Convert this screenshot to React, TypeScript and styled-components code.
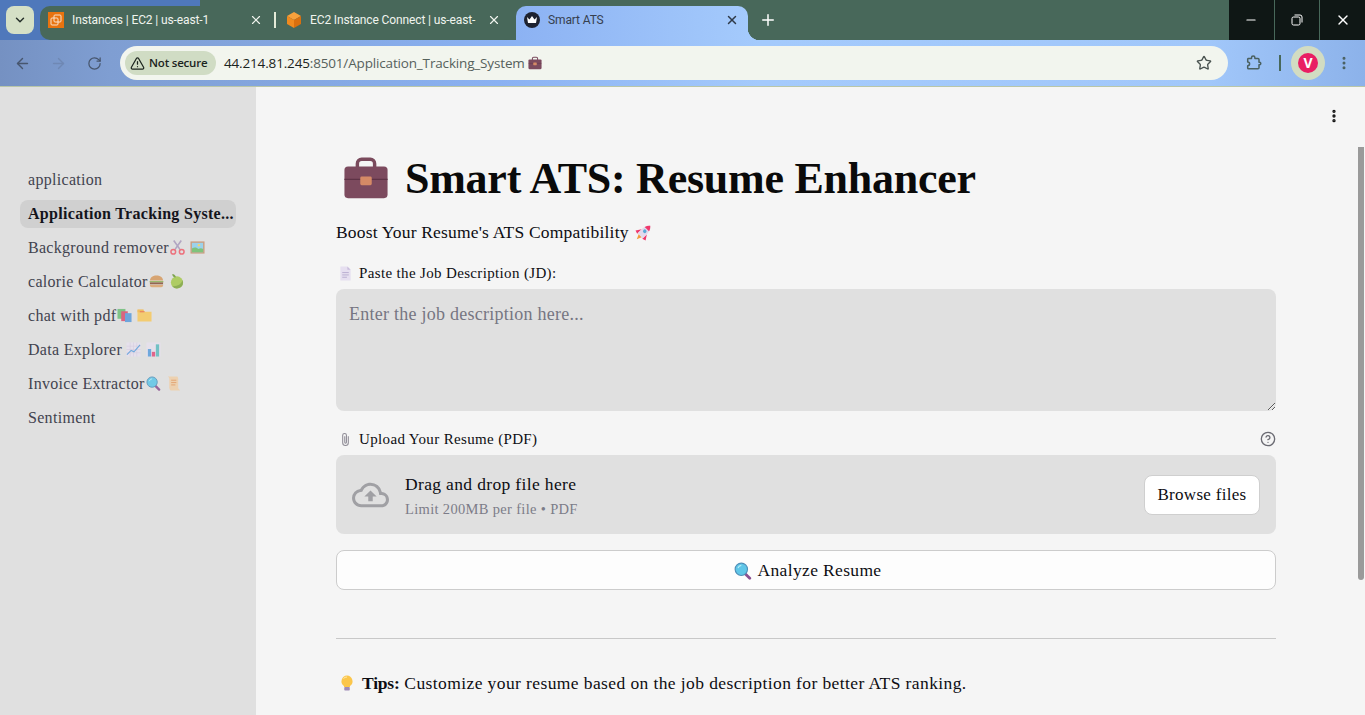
import { FC, ReactNode } from 'react';
import styled, { createGlobalStyle } from 'styled-components';
import {
  ArrowLeft,
  ArrowRight,
  ChevronDown,
  CircleHelp,
  EllipsisVertical,
  Minus,
  Plus,
  RotateCw,
  Star,
  TriangleAlert,
  X,
} from 'lucide-react';
import { MdOutlineCloudUpload } from 'react-icons/md';

const SERIF = '"Liberation Serif", "Times New Roman", serif';
const UI = '"Open Sans", "Noto Sans", sans-serif';
const TAB_FONT = 'Roboto, "Noto Sans", sans-serif';

const GlobalStyle = createGlobalStyle`
  html, body {
    margin: 0;
    padding: 0;
    overflow: hidden;
    background: #f5f5f5;
  }
  * {
    box-sizing: border-box;
  }
`;

type EmojiName =
  | 'briefcase' | 'rocket' | 'page' | 'clip' | 'scissors' | 'picture' | 'burger' | 'apple'
  | 'books' | 'folder' | 'trend' | 'bars' | 'magnifier' | 'scroll' | 'bulb';

const EMOJI: Record<EmojiName, ReactNode> = {
  briefcase: (
    <>
      <path d="M10 9V6a3 3 0 0 1 3-3h6a3 3 0 0 1 3 3v3" fill="none" stroke="#7a4a5c" strokeWidth="2.4" />
      <rect x="1" y="8" width="30" height="22" rx="2.5" fill="#7c4a5e" />
      <path d="M1 17h30" stroke="#5e3346" strokeWidth="0.8" />
      <rect x="12" y="15" width="8" height="6" rx="1" fill="#d58a66" />
    </>
  ),
  rocket: (
    <g transform="rotate(45 16 16)">
      <path d="M12 23h8l-4 9z" fill="#f59c3c" />
      <path d="M10 14l-6 9 6 2zM22 14l6 9-6 2z" fill="#f0386b" />
      <path d="M16 0c5 4 7 11 6 24H10C9 11 11 4 16 0z" fill="#e3d9ec" />
      <path d="M16 0c2.500 2 4.200 4.500 5.200 8H10.800C11.800 4.500 13.500 2 16 0z" fill="#f0386b" />
      <circle cx="16" cy="13" r="3" fill="#5aa9d6" />
    </g>
  ),
  page: (
    <>
      <path d="M5 1h15l7 7v23H5z" fill="#e6dff0" />
      <path d="M20 1l7 7h-7z" fill="#c9bddb" />
      <path d="M9 14h14M9 19h14M9 24h10" stroke="#b9add0" strokeWidth="2" />
    </>
  ),
  clip: (
    <path
      d="M22 9v14a6 6 0 0 1-12 0V7a4 4 0 0 1 8 0v15a1.800 1.800 0 0 1-3.600 0V9"
      fill="none"
      stroke="#8d8a94"
      strokeWidth="2.200"
    />
  ),
  scissors: (
    <>
      <path d="M8 1l14 20M24 1L10 21" stroke="#a99bbd" strokeWidth="3.400" />
      <circle cx="7" cy="25" r="5" fill="none" stroke="#ef5f6c" strokeWidth="3.200" />
      <circle cx="25" cy="25" r="5" fill="none" stroke="#ef5f6c" strokeWidth="3.200" />
    </>
  ),
  picture: (
    <>
      <rect x="1" y="3" width="30" height="26" fill="#c99470" />
      <rect x="4" y="6" width="24" height="20" fill="#8fd0ee" />
      <path d="M4 26v-8c6-4 11-2 14 1 3-2 7-2 10 0v7z" fill="#6fbe6a" />
      <circle cx="19" cy="11" r="2.500" fill="#f7d25c" />
    </>
  ),
  burger: (
    <>
      <path d="M2 14C2 7 9 3 16 3s14 4 14 11z" fill="#d69a5f" />
      <rect x="1" y="15" width="30" height="3" rx="1.500" fill="#8fb35a" />
      <rect x="2" y="18" width="28" height="4" fill="#86503c" />
      <path d="M2 23h28v1a4 4 0 0 1-4 4H6a4 4 0 0 1-4-4z" fill="#dba56c" />
    </>
  ),
  apple: (
    <>
      <circle cx="17" cy="18" r="13" fill="#a6c94f" />
      <path d="M30 18a13 13 0 0 1-23 8c10 1 19-3 22-13z" fill="#7fa63d" />
      <path d="M7 0c4 0 7 3 8 7-4 1-8-2-8-7z" fill="#6d9a38" />
    </>
  ),
  books: (
    <>
      <rect x="1" y="2" width="17" height="21" fill="#6fbf78" />
      <rect x="9" y="7" width="14" height="21" fill="#d94f70" />
      <rect x="17" y="11" width="14" height="19" fill="#5a9bdc" />
    </>
  ),
  folder: (
    <>
      <path d="M1 5h13l3 3h14v21H1z" fill="#f7c95e" />
      <path d="M1 3h13v6H1z" fill="#f3b84a" />
      <path d="M6 8h10" stroke="#e8604c" strokeWidth="2" />
    </>
  ),
  trend: (
    <>
      <rect x="1" y="1" width="30" height="30" fill="#e6e0ee" />
      <path d="M1 9h30M1 16h30M1 23h30M9 1v30M16 1v30M23 1v30" stroke="#cfc6dc" />
      <path d="M2 27l9-9 6 3L30 6" fill="none" stroke="#5b9fdc" strokeWidth="2.400" />
    </>
  ),
  bars: (
    <>
      <rect x="1" y="1" width="30" height="30" fill="#e6e0ee" />
      <rect x="4" y="15" width="7" height="16" fill="#5b9fdc" />
      <rect x="12.500" y="21" width="7" height="10" fill="#e0507c" />
      <rect x="21" y="5" width="7" height="26" fill="#5fbcc0" />
    </>
  ),
  magnifier: (
    <>
      <path d="M19 20l9 9" stroke="#8a4f90" strokeWidth="5" strokeLinecap="round" />
      <circle cx="13" cy="13" r="11" fill="#5fc6e8" stroke="#4f8fb8" strokeWidth="2" />
      <path d="M7 11a7 7 0 0 1 6-5" fill="none" stroke="#b8ecf8" strokeWidth="2" />
    </>
  ),
  scroll: (
    <>
      <path d="M4 1h20c2 2 2 4 2 6v19l4 5H10c-2-2-3-4-3-6V7C7 5 7 3 4 1z" fill="#f0cfa8" />
      <path d="M11 9h11M11 14h11M11 19h9" stroke="#e39a5f" strokeWidth="2" />
    </>
  ),
  bulb: (
    <>
      <path d="M16 1a11.500 11.500 0 0 0-6 21v2h12v-2a11.500 11.500 0 0 0-6-21z" fill="#fbc64b" />
      <path d="M9 7a9 9 0 0 1 7-3" fill="none" stroke="#ffe9a8" strokeWidth="2" />
      <rect x="10.500" y="24" width="11" height="7" rx="1.500" fill="#a08cb8" />
    </>
  ),
};

const EmojiSvg = styled.svg<{ $size: number; $gap?: number }>`
  width: ${({ $size }) => $size}px;
  height: ${({ $size }) => $size}px;
  margin-left: ${({ $gap }) => $gap ?? 0}px;
  flex-shrink: 0;
  display: inline-block;
`;

const Emoji: FC<{ name: EmojiName; size: number; gap?: number }> = ({ name, size, gap }) => (
  <EmojiSvg viewBox="0 0 32 32" $size={size} $gap={gap}>
    {EMOJI[name]}
  </EmojiSvg>
);

const Shell = styled.div`
  width: 1365px;
  height: 715px;
  display: flex;
  flex-direction: column;
  overflow: hidden;
  position: relative;
`;

/* browser chrome */
const TabStrip = styled.div`
  height: 40px;
  display: flex;
  align-items: flex-start;
  background: linear-gradient(90deg, #4f78bb 0 200px, #48685a 200px);
  flex-shrink: 0;
`;

const TabSearch = styled.div`
  width: 28px;
  height: 28px;
  margin: 6px 6px 0 6px;
  border-radius: 8px;
  background: #d5e0c6;
  color: #26302a;
  display: flex;
  align-items: center;
  justify-content: center;
`;

const TabGroup = styled.div`
  width: 476px;
  height: 34px;
  margin-top: 6px;
  padding-bottom: 6px;
  background: #48685a;
  border-radius: 10px 0 12px 10px;
  display: flex;
  align-items: center;
`;

const Tab = styled.div<{ $width: number; $left: number; $right: number }>`
  width: ${({ $width }) => $width}px;
  height: 100%;
  display: flex;
  align-items: center;
  padding: 0 ${({ $right }) => $right}px 0 ${({ $left }) => $left}px;
  color: #f0f4ee;
  font: 12px/16px ${TAB_FONT};
  white-space: nowrap;
  overflow: hidden;
  flex-shrink: 0;
`;

const TabTitle = styled.span`
  flex: 1;
  margin-left: 8px;
  letter-spacing: -0.12px;
`;

const TabClose = styled.span<{ $dark?: boolean }>`
  width: 28px;
  display: flex;
  justify-content: center;
  color: ${({ $dark }) => ($dark ? '#2f3a48' : '#f0f4ee')};
  flex-shrink: 0;
`;

const TabDivider = styled.span`
  width: 2px;
  height: 16px;
  background: #e4ead8;
  flex-shrink: 0;
`;

const ActiveTab = styled.div`
  position: relative;
  width: 232px;
  height: 34px;
  margin-top: 6px;
  padding: 0 2px 6px 8px;
  display: flex;
  align-items: center;
  border-radius: 10px 10px 0 0;
  background: linear-gradient(90deg, #8cb2f3, #a4cafc);
  color: #36404e;
  font: 12px/16px ${TAB_FONT};

  &::after {
    content: '';
    position: absolute;
    right: -12px;
    bottom: 0;
    width: 12px;
    height: 12px;
    background: radial-gradient(circle at 100% 0, transparent 12px, #a4cafc 12.500px);
  }
`;

const NewTab = styled.div`
  width: 40px;
  height: 40px;
  display: flex;
  align-items: center;
  justify-content: center;
  color: #fff;
`;

const StripSpacer = styled.div`
  flex: 1;
`;

const WindowControls = styled.div`
  width: 136px;
  height: 40px;
  display: flex;
  background: #0f1715;
`;

const WindowButton = styled.div`
  flex: 1;
  display: flex;
  align-items: center;
  justify-content: center;
  color: #fff;

  & + & {
    border-left: 1px solid #48685a;
  }
`;

const RestoreIcon = () => (
  <svg width="12" height="12" viewBox="0 0 12 12" fill="none" stroke="#fff" strokeWidth="1">
    <rect x="1" y="3" width="8" height="8" rx="1.500" />
    <path d="M3.500 1h5.500a2 2 0 0 1 2 2v5.500" />
  </svg>
);

const ExtensionIcon = () => (
  <svg width="18" height="18" viewBox="0 0 18 18" fill="none" stroke="currentColor" strokeWidth="1.500" strokeLinejoin="round">
    <path d="M3 4.500h3.500V3.800a1.700 1.700 0 0 1 3.400 0v.7h3.100a1 1 0 0 1 1 1v2.700h.5a1.300 1.300 0 0 1 0 2.600H14v2.900a1 1 0 0 1-1 1H3.500a.8.800 0 0 1-.8-.8v-2.200a1.800 1.800 0 0 0 0-3.800V5.300a.8.800 0 0 1 .3-.8z" />
  </svg>
);

const Toolbar = styled.div`
  height: 47px;
  flex-shrink: 0;
  display: flex;
  align-items: flex-start;
  padding: 6px 0 0 4px;
  background: linear-gradient(90deg, #7591c2 0, #7f9ed2 110px, #8ab1f2 500px, #a4cafc 760px, #a1c7fa 1210px, #8cb2ea 1365px);
  border-bottom: 1px solid #b9c6a8;
`;

const NavButton = styled.div<{ $muted?: boolean }>`
  width: 36px;
  height: 34px;
  display: flex;
  align-items: center;
  justify-content: center;
  color: ${({ $muted }) => ($muted ? '#6f88b4' : '#47566e')};
`;

const Omnibox = styled.div`
  width: 1108px;
  height: 34px;
  margin-left: 8px;
  border-radius: 17px;
  background: #f2f5ee;
  display: flex;
  align-items: center;
  padding-left: 5px;
`;

const SecurityChip = styled.div`
  width: 91px;
  height: 24px;
  border-radius: 12px;
  background: #d0dcc4;
  color: #1c241e;
  display: flex;
  align-items: center;
  padding-left: 5px;
  gap: 4px;
  font: 600 11.500px/16px ${UI};
  letter-spacing: -0.2px;
  white-space: nowrap;
`;

const UrlText = styled.div`
  margin-left: 8px;
  flex: 1;
  display: flex;
  align-items: center;
  gap: 3px;
  font: 13.500px/18px ${UI};
  letter-spacing: -0.16px;
  color: #56615c;
  white-space: nowrap;
`;

const UrlHost = styled.span`
  color: #1b2420;
`;

const OmniStar = styled.div`
  width: 48px;
  display: flex;
  justify-content: center;
  color: #4a5350;
`;

const ToolbarIcon = styled.div`
  width: 28px;
  height: 34px;
  margin-left: 12px;
  display: flex;
  align-items: center;
  justify-content: center;
  color: #4a6060;
`;

const ToolbarDivider = styled.span`
  width: 2px;
  height: 16px;
  margin: 9px 10px 0 11px;
  background: #48685a;
`;

const AvatarRing = styled.div`
  width: 34px;
  height: 34px;
  border-radius: 50%;
  background: #d2dcc2;
  display: flex;
  align-items: center;
  justify-content: center;
`;

const Avatar = styled.div`
  width: 20px;
  height: 20px;
  border-radius: 50%;
  background: #e91e63;
  color: #fff;
  font: 700 14px/20px ${UI};
  text-align: center;
`;

const ToolbarMenu = styled.div`
  width: 38px;
  height: 34px;
  display: flex;
  align-items: center;
  justify-content: center;
  color: #4a6060;
`;

/* page */
const Viewport = styled.div`
  flex: 1;
  display: flex;
  min-height: 0;
  font-family: ${SERIF};
  color: #0d0d12;
`;

const Sidebar = styled.nav`
  width: 256px;
  flex-shrink: 0;
  background: #e0e0e0;
  padding: 79px 20px 0;
  display: flex;
  flex-direction: column;
  gap: 6px;
`;

const NavItem = styled.div<{ $active?: boolean }>`
  height: 28px;
  border-radius: 8px;
  padding: 0 0 1px 8px;
  display: flex;
  align-items: center;
  white-space: nowrap;
  font-size: 16px;
  letter-spacing: 0.3px;
  font-weight: ${({ $active }) => ($active ? 700 : 400)};
  color: ${({ $active }) => ($active ? '#14141c' : '#42434f')};
  background: ${({ $active }) => ($active ? '#d0d0d0' : 'transparent')};

  svg {
    opacity: 0.85;
  }
`;

const Main = styled.main`
  flex: 1;
  position: relative;
  background: #f5f5f5;
  padding: 59px 0 0 80px;
`;

const Column = styled.div`
  width: 940px;
`;

const Title = styled.h1`
  height: 64px;
  margin: 0;
  padding-left: 7px;
  display: flex;
  align-items: center;
  gap: 16px;
  font-size: 44px;
  font-weight: 700;
  letter-spacing: -0.25px;
  color: #0a0a0a;
  white-space: nowrap;
`;

const Subtitle = styled.p`
  height: 24px;
  margin: 10px 0 0;
  display: flex;
  align-items: center;
  gap: 5px;
  font-size: 17.500px;
  letter-spacing: 0.19px;
`;

const FieldLabel = styled.label<{ $top: number }>`
  height: 20px;
  margin-top: ${({ $top }) => $top}px;
  padding-left: 2px;
  display: flex;
  align-items: center;
  gap: 6px;
  font-size: 15px;
  letter-spacing: 0.35px;
`;

const HelpIcon = styled.span`
  margin-left: auto;
  display: flex;
  color: #6a6a72;
`;

const JobInput = styled.textarea`
  display: block;
  width: 100%;
  height: 122px;
  margin-top: 6px;
  padding: 14px 13px;
  border: 0;
  border-radius: 8px;
  outline: 0;
  background: #e0e0e0;
  font-family: ${SERIF};
  font-size: 18px;
  letter-spacing: 0.25px;
  line-height: 22px;
  color: #0d0d12;

  &::placeholder {
    color: #767682;
    opacity: 1;
  }
`;

const Dropzone = styled.section`
  height: 79px;
  margin-top: 6px;
  padding: 0 16px;
  border-radius: 8px;
  background: #e0e0e0;
  display: flex;
  align-items: center;
`;

const CloudIcon = styled.span`
  width: 37px;
  margin-right: 16px;
  display: flex;
  justify-content: center;
  color: #a0a0a4;
`;

const DropText = styled.div`
  flex: 1;
  padding-top: 3px;
  display: flex;
  flex-direction: column;
  gap: 4px;
`;

const DropTitle = styled.span`
  height: 22px;
  line-height: 22px;
  font-size: 17.500px;
  letter-spacing: 0.35px;
`;

const DropHint = styled.span`
  height: 20px;
  line-height: 20px;
  font-size: 14.500px;
  letter-spacing: 0.33px;
  color: #7c7c88;
`;

const BrowseButton = styled.button`
  width: 116px;
  height: 40px;
  border: 1px solid #cfcfcf;
  border-radius: 8px;
  background: #fff;
  font-family: ${SERIF};
  font-size: 17px;
  letter-spacing: 0.3px;
  color: #0d0d12;
  padding: 0;
`;

const AnalyzeButton = styled.button`
  width: 100%;
  height: 40px;
  margin-top: 16px;
  border: 1px solid #cccccc;
  border-radius: 8px;
  background: #fdfdfd;
  display: flex;
  align-items: center;
  justify-content: center;
  gap: 6px;
  font-family: ${SERIF};
  font-size: 17.500px;
  letter-spacing: 0.35px;
  color: #0d0d12;
  padding: 1px 0 0 3px;
`;

const Rule = styled.hr`
  height: 1px;
  margin: 48px 0 0;
  border: 0;
  background: #c8c8c8;
`;

const Tips = styled.p`
  height: 24px;
  margin: 32px 0 0;
  padding-left: 3px;
  display: flex;
  align-items: center;
  gap: 7px;
  font-size: 17.500px;
  letter-spacing: 0.4px;
  white-space: pre;

  strong {
    letter-spacing: -0.2px;
  }
`;

const TipsText = styled.span`
  display: block;
`;

const MainMenu = styled.div`
  position: absolute;
  top: 21px;
  right: 23px;
  display: flex;
  color: #111;
`;

const Scrollbar = styled.div`
  position: absolute;
  top: 60px;
  right: 1px;
  width: 6px;
  height: 433px;
  border-radius: 0 0 3px 3px;
  background: #9a9a9a;
`;

const Ec2Icon = () => (
  <svg width="16" height="16" viewBox="0 0 16 16" fill="none">
    <rect width="16" height="16" fill="#e8730f" />
    <rect x="6" y="3" width="7" height="7" rx="1" stroke="#fbe3cc" />
    <rect x="3" y="6" width="7" height="7" rx="1" stroke="#fbe3cc" />
  </svg>
);

const CubeIcon = () => (
  <svg width="16" height="16" viewBox="0 0 16 16">
    <path d="M8 0l7 4-7 4-7-4z" fill="#f7a13c" />
    <path d="M1 4l7 4v8l-7-4z" fill="#f08a1e" />
    <path d="M15 4l-7 4v8l7-4z" fill="#d96f0e" />
  </svg>
);

const CrownIcon = () => (
  <svg width="16" height="16" viewBox="0 0 16 16">
    <circle cx="8" cy="8" r="8" fill="#1e2230" />
    <path d="M3 5l2.500 2.500L8 4l2.500 3.500L13 5l-1 6H4z" fill="#fff" />
  </svg>
);

const NAV_ITEMS: { label: string; emoji?: [EmojiName, EmojiName]; gap?: number; active?: boolean }[] = [
  { label: 'application' },
  { label: 'Application Tracking Syste...', active: true },
  { label: 'Background remover', emoji: ['scissors', 'picture'], gap: 1 },
  { label: 'calorie Calculator', emoji: ['burger', 'apple'], gap: 1 },
  { label: 'chat with pdf', emoji: ['books', 'folder'], gap: 1 },
  { label: 'Data Explorer', emoji: ['trend', 'bars'], gap: 4 },
  { label: 'Invoice Extractor', emoji: ['magnifier', 'scroll'], gap: 1 },
  { label: 'Sentiment' },
];

export default function App() {
  return (
    <Shell>
      <GlobalStyle />
      <TabStrip>
        <TabSearch>
          <ChevronDown size={14} strokeWidth={2.5} />
        </TabSearch>
        <TabGroup>
          <Tab $width={234} $left={8} $right={4}>
            <Ec2Icon />
            <TabTitle>Instances | EC2 | us-east-1</TabTitle>
            <TabClose>
              <X size={14} />
            </TabClose>
          </Tab>
          <TabDivider />
          <Tab $width={240} $left={10} $right={8}>
            <CubeIcon />
            <TabTitle>EC2 Instance Connect | us-east-</TabTitle>
            <TabClose>
              <X size={14} />
            </TabClose>
          </Tab>
        </TabGroup>
        <ActiveTab>
          <CrownIcon />
          <TabTitle>Smart ATS</TabTitle>
          <TabClose $dark>
            <X size={14} strokeWidth={2.5} />
          </TabClose>
        </ActiveTab>
        <NewTab>
          <Plus size={18} strokeWidth={2} />
        </NewTab>
        <StripSpacer />
        <WindowControls>
          <WindowButton>
            <Minus size={14} />
          </WindowButton>
          <WindowButton>
            <RestoreIcon />
          </WindowButton>
          <WindowButton>
            <X size={16} />
          </WindowButton>
        </WindowControls>
      </TabStrip>
      <Toolbar>
        <NavButton>
          <ArrowLeft size={17} />
        </NavButton>
        <NavButton $muted>
          <ArrowRight size={17} />
        </NavButton>
        <NavButton>
          <RotateCw size={15} />
        </NavButton>
        <Omnibox>
          <SecurityChip>
            <TriangleAlert size={15} />
            Not secure
          </SecurityChip>
          <UrlText>
            <span>
              <UrlHost>44.214.81.245</UrlHost>:8501/Application_Tracking_System
            </span>
            <Emoji name="briefcase" size={14} />
          </UrlText>
          <OmniStar>
            <Star size={16} />
          </OmniStar>
        </Omnibox>
        <ToolbarIcon>
          <ExtensionIcon />
        </ToolbarIcon>
        <ToolbarDivider />
        <AvatarRing>
          <Avatar>V</Avatar>
        </AvatarRing>
        <ToolbarMenu>
          <EllipsisVertical size={16} strokeWidth={2.5} />
        </ToolbarMenu>
      </Toolbar>
      <Viewport>
        <Sidebar>
          {NAV_ITEMS.map((item) => (
            <NavItem key={item.label} $active={item.active}>
              {item.label}
              {item.emoji && (
                <>
                  <Emoji name={item.emoji[0]} size={15} gap={item.gap ?? 0} />
                  <Emoji name={item.emoji[1]} size={15} gap={5} />
                </>
              )}
            </NavItem>
          ))}
        </Sidebar>
        <Main>
          <Column>
            <Title>
              <Emoji name="briefcase" size={46} />
              Smart ATS: Resume Enhancer
            </Title>
            <Subtitle>
              Boost Your Resume's ATS Compatibility
              <Emoji name="rocket" size={19} />
            </Subtitle>
            <FieldLabel $top={19}>
              <Emoji name="page" size={15} />
              Paste the Job Description (JD):
            </FieldLabel>
            <JobInput placeholder="Enter the job description here..." />
            <FieldLabel $top={18}>
              <Emoji name="clip" size={15} />
              Upload Your Resume (PDF)
              <HelpIcon>
                <CircleHelp size={16} />
              </HelpIcon>
            </FieldLabel>
            <Dropzone>
              <CloudIcon>
                <MdOutlineCloudUpload size={42} />
              </CloudIcon>
              <DropText>
                <DropTitle>Drag and drop file here</DropTitle>
                <DropHint>Limit 200MB per file • PDF</DropHint>
              </DropText>
              <BrowseButton>Browse files</BrowseButton>
            </Dropzone>
            <AnalyzeButton>
              <Emoji name="magnifier" size={18} />
              Analyze Resume
            </AnalyzeButton>
            <Rule />
            <Tips>
              <Emoji name="bulb" size={16} />
              <TipsText>
                <strong>Tips:</strong> Customize your resume based on the job description for better ATS ranking.
              </TipsText>
            </Tips>
          </Column>
          <MainMenu>
            <EllipsisVertical size={16} strokeWidth={3} />
          </MainMenu>
          <Scrollbar />
        </Main>
      </Viewport>
    </Shell>
  );
}
